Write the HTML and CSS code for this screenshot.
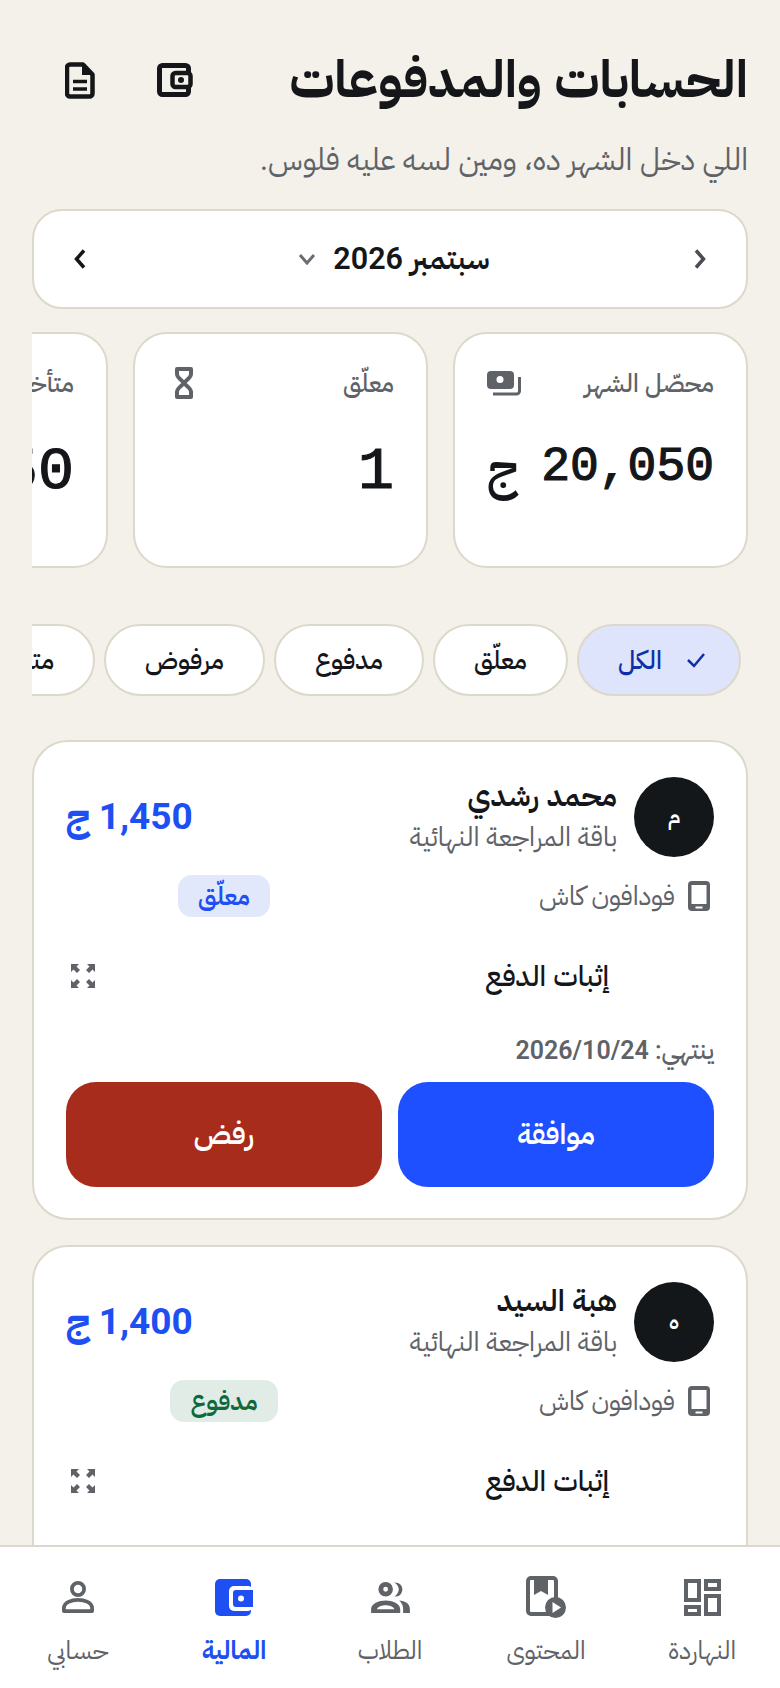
FILE: index.html
```html
<!DOCTYPE html>
<html lang="ar" dir="rtl">
<head>
  <meta charset="UTF-8" />
  <title>الحسابات والمدفوعات</title>
  <link rel="stylesheet" href="styles.css">
</head>
<body>
  <div class="app">
    <main class="content">
      <header class="top">
        <h1>الحسابات والمدفوعات</h1>
        <div class="top-actions">
          <svg class="ic-wallet" viewBox="0 0 36 34"><rect x="2.500" y="2.500" width="29" height="29" rx="3" fill="none" stroke="currentColor" stroke-width="5"/><rect x="15.500" y="10" width="18" height="14" rx="3" fill="#f4f1ea" stroke="currentColor" stroke-width="4.500"/><circle cx="24" cy="17" r="3" fill="currentColor"/></svg>
          <svg class="ic-doc" viewBox="0 0 30 37"><path d="M5 2.500h13l9.500 10v19a3 3 0 0 1-3 3H5a3 3 0 0 1-3-3v-26a3 3 0 0 1 3-3z" fill="none" stroke="currentColor" stroke-width="4.500" stroke-linejoin="round"/><path d="M17 2v11h10z" fill="currentColor"/><path d="M8 19.500h14M8 27h14" stroke="currentColor" stroke-width="3.500"/></svg>
        </div>
      </header>
      <p class="subtitle">اللي دخل الشهر ده، ومين لسه عليه فلوس.</p>

      <section class="month-bar">
        <svg class="ic-chev muted" viewBox="0 0 14 22"><path d="M3 2.500l7.500 8.500L3 19.500" fill="none" stroke="currentColor" stroke-width="3.500"/></svg>
        <div class="month-label"><span>سبتمبر 2026</span>
          <svg class="ic-down" viewBox="0 0 18 12"><path d="M2 2l7 8 7-8" fill="none" stroke="currentColor" stroke-width="3"/></svg>
        </div>
        <svg class="ic-chev" viewBox="0 0 14 22"><path d="M11 2.500L3.500 11l7.500 8.500" fill="none" stroke="currentColor" stroke-width="3.500"/></svg>
      </section>

      <section class="stats">
        <div class="stat">
          <div class="stat-head"><span>محصّل الشهر</span>
            <svg class="ic-money" viewBox="0 0 34 25"><rect x="0" y="0" width="27" height="18" rx="4" fill="currentColor"/><circle cx="13" cy="8.500" r="3.500" fill="#fff"/><path d="M32.500 6v14a3 3 0 0 1-3 3H6" fill="none" stroke="currentColor" stroke-width="3"/></svg>
          </div>
          <div class="stat-value"><span class="mono" dir="ltr">20,050</span> <span class="cur">ج</span></div>
        </div>
        <div class="stat">
          <div class="stat-head"><span>معلّق</span>
            <svg class="ic-hour" viewBox="-7 0 34 32"><path d="M3 2h14v5c0 4-5 6-7 9 2 3 7 5 7 9v5H3v-5c0-4 5-6 7-9-2-3-7-5-7-9z" fill="none" stroke="currentColor" stroke-width="4" stroke-linejoin="round"/></svg>
          </div>
          <div class="stat-value big"><span class="mono">1</span></div>
        </div>
        <div class="stat">
          <div class="stat-head"><span>متأخر</span></div>
          <div class="stat-value big"><span class="mono" dir="ltr">3,150</span></div>
        </div>
      </section>

      <nav class="chips">
        <span class="chip on"><svg class="ic-check" viewBox="0 0 20 16"><path d="M2 8l6 6L18 2" fill="none" stroke="currentColor" stroke-width="2.500"/></svg>الكل</span>
        <span class="chip">معلّق</span>
        <span class="chip">مدفوع</span>
        <span class="chip">مرفوض</span>
        <span class="chip">متأخر</span>
      </nav>

      <article class="pay-card">
        <div class="pay-top">
          <div class="avatar">م</div>
          <div class="who"><div class="name">محمد رشدي</div><div class="plan">باقة المراجعة النهائية</div></div>
          <div class="amount"><span dir="ltr">1,450</span> ج</div>
        </div>
        <div class="pay-mid">
          <div class="method"><svg class="ic-phone" viewBox="0 0 22 30"><rect x="0" y="0" width="22" height="30" rx="4" fill="currentColor"/><rect x="3.500" y="4" width="15" height="19" fill="#fff"/><rect x="7.500" y="25.500" width="7" height="2" fill="#fff"/></svg>فودافون كاش</div>
          <div class="badge-cell"><span class="badge pending">معلّق</span></div>
        </div>
        <div class="proof"><span>إثبات الدفع</span>
          <svg class="ic-expand" viewBox="0 0 26 26"><path d="M1 1h8L6.500 3.500 10 7 7 10 3.500 6.500 1 9zM25 1v8l-2.500-2.500L19 10l-3-3 3.500-3.500L17 1zM1 25v-8l2.500 2.500L7 16l3 3-3.500 3.500L9 25zM25 25h-8l2.500-2.500L16 19l3-3 3.500 3.500L25 17z" fill="currentColor"/></svg>
        </div>
        <div class="expiry">ينتهي: <span class="num">2026/10/24</span></div>
        <div class="actions">
          <button class="btn approve">موافقة</button>
          <button class="btn reject">رفض</button>
        </div>
      </article>

      <article class="pay-card tail">
        <div class="pay-top">
          <div class="avatar">ه</div>
          <div class="who"><div class="name">هبة السيد</div><div class="plan">باقة المراجعة النهائية</div></div>
          <div class="amount"><span dir="ltr">1,400</span> ج</div>
        </div>
        <div class="pay-mid">
          <div class="method"><svg class="ic-phone" viewBox="0 0 22 30"><rect x="0" y="0" width="22" height="30" rx="4" fill="currentColor"/><rect x="3.500" y="4" width="15" height="19" fill="#fff"/><rect x="7.500" y="25.500" width="7" height="2" fill="#fff"/></svg>فودافون كاش</div>
          <div class="badge-cell"><span class="badge paid">مدفوع</span></div>
        </div>
        <div class="proof"><span>إثبات الدفع</span>
          <svg class="ic-expand" viewBox="0 0 26 26"><path d="M1 1h8L6.500 3.500 10 7 7 10 3.500 6.500 1 9zM25 1v8l-2.500-2.500L19 10l-3-3 3.500-3.500L17 1zM1 25v-8l2.500 2.500L7 16l3 3-3.500 3.500L9 25zM25 25h-8l2.500-2.500L16 19l3-3 3.500 3.500L25 17z" fill="currentColor"/></svg>
        </div>
      </article>
    </main>

    <footer class="tabs">
      <div class="tab"><span class="tab-ic"><svg width="37" height="37" viewBox="0 0 37 37"><path d="M2 2h13v19H2zM22 2h13v8H22zM22 17h13v18H22zM2 28h13v7H2z" fill="none" stroke="currentColor" stroke-width="4"/></svg></span>النهاردة</div>
      <div class="tab"><span class="tab-ic"><svg width="40" height="42" viewBox="0 0 40 42"><path d="M2 5a3 3 0 0 1 3-3h22a3 3 0 0 1 3 3v33H5a3 3 0 0 1-3-3z" fill="none" stroke="currentColor" stroke-width="4"/><path d="M8 1h14v18l-7-4-7 4z" fill="currentColor"/><circle cx="29.500" cy="31.500" r="10.500" fill="currentColor"/><path d="M26.500 26v11l8.500-5.500z" fill="#fff"/></svg></span>المحتوى</div>
      <div class="tab"><span class="tab-ic"><svg width="41" height="33" viewBox="0 1 42 34"><path d="M16 2a7.500 7.500 0 1 0 0 15 7.500 7.500 0 0 0 0-15zm0 5a2.500 2.500 0 1 1 0 5 2.500 2.500 0 0 1 0-5z" fill="currentColor" fill-rule="evenodd"/><path d="M1 34v-4c0-6 8-9 15-9s15 3 15 9v4zm6-4h18c-1-3-6-4-9-4s-8 1-9 4z" fill="currentColor" fill-rule="evenodd"/><path d="M25 2.500c7 0 9 5 8 9s-4 6-8 5.500c3-2 4.500-5 4.500-7.500S28 4.500 25 2.500zM30 21c6 .5 11 3 11 9v4h-7v-5c0-3-2-6-4-8z" fill="currentColor"/></svg></span>الطلاب</div>
      <div class="tab on"><span class="tab-ic"><svg width="38" height="37" viewBox="0 0 38 37"><rect x="0" y="0" width="36" height="37" rx="5" fill="currentColor"/><rect x="14" y="7" width="24" height="25" rx="5" fill="#fff"/><path d="M21 11h17v17H21a3 3 0 0 1-3-3V14a3 3 0 0 1 3-3z" fill="currentColor"/><circle cx="26" cy="19.500" r="3" fill="#fff"/></svg></span>المالية</div>
      <div class="tab"><span class="tab-ic"><svg width="32" height="32" viewBox="0 0 34 34"><circle cx="17" cy="8.500" r="6.500" fill="none" stroke="currentColor" stroke-width="4"/><path d="M2 32v-3c0-6 8-9 15-9s15 3 15 9v3z" fill="none" stroke="currentColor" stroke-width="4" stroke-linejoin="round"/></svg></span>حسابي</div>
    </footer>
  </div>
</body>
</html>
```

FILE: styles.css
```css
* {
  box-sizing: border-box;
}

html,
body {
  margin: 0;
  padding: 0;
}

body {
  font-family: 'Roboto', 'IBM Plex Sans Arabic', 'Noto Sans Arabic', 'Noto Sans', 'DejaVu Sans', sans-serif;
  color: #14161a;
  background: #f4f1ea;
}

.app {
  width: 780px;
  height: 1688px;
  display: flex;
  flex-direction: column;
  overflow: hidden;
}

.content {
  flex: 1;
  min-height: 0;
  overflow: hidden;
  padding: 50px 32px 0;
}

.top {
  display: flex;
  justify-content: space-between;
  align-items: center;
  height: 60px;
}

h1 {
  margin: 0;
  font-size: 51px;
  font-weight: 700;
  line-height: 60px;
}

.top-actions {
  display: flex;
  gap: 62px;
  align-items: center;
  padding-left: 33px;
}

.ic-wallet {
  width: 36px;
  height: 34px;
}

.ic-doc {
  width: 30px;
  height: 37px;
}

.subtitle {
  margin: 30px 0 0;
  font-size: 30.500px;
  line-height: 40px;
  color: #5f6368;
}

.month-bar {
  margin-top: 29px;
  height: 100px;
  display: flex;
  justify-content: space-between;
  align-items: center;
  padding: 0 39px;
  background: #fff;
  border: 2px solid #dcd8cb;
  border-radius: 30px;
}

.ic-chev {
  width: 14px;
  height: 22px;
}

.muted {
  color: #4a4e54;
}

.month-label {
  margin-left: 8px;
  display: flex;
  align-items: center;
  gap: 17px;
  font-size: 30.500px;
  font-weight: 600;
}

.ic-down {
  width: 18px;
  height: 12px;
  color: #6a6e73;
}

.stats {
  margin-top: 23px;
  display: flex;
  gap: 25px;
  overflow: hidden;
}

.stat {
  flex: 0 0 295px;
  height: 236px;
  padding: 32px 32px;
  background: #fff;
  border: 2px solid #dcd8cb;
  border-radius: 34px;
}

.stat-head {
  display: flex;
  justify-content: space-between;
  align-items: center;
  height: 34px;
  font-size: 25px;
  font-weight: 500;
  color: #5f6368;
}

.ic-money {
  width: 34px;
  height: 25px;
}

.ic-hour {
  width: 34px;
  height: 32px;
}

.stat-value {
  margin-top: 37px;
  display: flex;
  align-items: center;
  justify-content: space-between;
  height: 70px;
}

.mono {
  margin-bottom: 10px;
  font-family: 'Liberation Mono', monospace;
  font-size: 48px;
  font-weight: 400;
  -webkit-text-stroke: 1.200px #14161a;
}

.big .mono {
  margin-bottom: 0;
  font-size: 60px;
}

.cur {
  margin-bottom: 5px;
  font-size: 50px;
  font-weight: 500;
}

.chips {
  margin-top: 56px;
  padding-right: 7px;
  display: flex;
  gap: 9px;
  overflow: hidden;
}

.chip {
  flex: none;
  height: 72px;
  padding: 0 39px;
  display: flex;
  align-items: center;
  gap: 24px;
  background: #fff;
  border: 2px solid #dcd8cb;
  border-radius: 36px;
  font-size: 26px;
  font-weight: 500;
}

.chip.on {
  padding: 0 33px 0 39px;
  background: #dee4fb;
  color: #0f2fa8;
}

.ic-check {
  width: 20px;
  height: 16px;
}

.pay-card {
  margin-top: 44px;
  padding: 34px 32px 31px;
  background: #fff;
  border: 2px solid #dcd8cb;
  border-radius: 36px;
}

.pay-card + .pay-card {
  margin-top: 25px;
}

.pay-card.tail {
  min-height: 480px;
}

.pay-top {
  display: flex;
  align-items: center;
  gap: 17px;
}

.avatar {
  flex: none;
  width: 80px;
  height: 80px;
  border-radius: 50%;
  background: #14171a;
  color: #fff;
  display: flex;
  align-items: center;
  justify-content: center;
  font-size: 21px;
  font-weight: 600;
}

.who {
  flex: 1;
}

.name {
  font-size: 30px;
  font-weight: 600;
  line-height: 39px;
}

.plan {
  margin-top: 3px;
  font-size: 27px;
  line-height: 39px;
  color: #5f6368;
}

.amount {
  font-size: 37px;
  font-weight: 700;
  color: #1d4ff2;
}

.pay-mid {
  margin-top: 18px;
  display: grid;
  grid-template-columns: 1fr 1fr;
  gap: 16px;
  align-items: center;
}

.method {
  display: flex;
  align-items: center;
  gap: 13px;
  padding-right: 4px;
  font-size: 26.500px;
  color: #5f6368;
}

.ic-phone {
  width: 22px;
  height: 30px;
}

.badge-cell {
  display: flex;
  justify-content: center;
}

.badge {
  height: 42px;
  padding: 0 20px;
  display: flex;
  align-items: center;
  border-radius: 14px;
  font-size: 25px;
  font-weight: 600;
}

.pending {
  background: #e2e8fb;
  color: #1d4ff2;
}

.paid {
  background: #e2ece6;
  color: #0e6a3e;
}

.proof {
  margin-top: 39px;
  display: flex;
  justify-content: space-between;
  align-items: center;
  padding: 0 105px 0 4px;
  height: 40px;
  font-size: 28.500px;
  font-weight: 500;
}

.ic-expand {
  width: 26px;
  height: 26px;
  color: #5f6368;
}

.expiry {
  margin-top: 36px;
  font-size: 25px;
  font-weight: 500;
  color: #5f6368;
}

.num {
  font-weight: 600;
  letter-spacing: 1px;
  unicode-bidi: isolate;
}

.actions {
  margin-top: 13px;
  display: grid;
  grid-template-columns: 1fr 1fr;
  gap: 16px;
}

.btn {
  height: 105px;
  border: none;
  border-radius: 30px;
  color: #fff;
  font-family: inherit;
  font-size: 29px;
  font-weight: 600;
}

.approve {
  background: #1e50ff;
}

.reject {
  background: #a82c1c;
}

.tabs {
  flex: none;
  height: 143px;
  display: grid;
  grid-template-columns: repeat(5, 1fr);
  background: #fff;
  border-top: 2px solid #dcd8cb;
}

.tab {
  display: flex;
  flex-direction: column;
  align-items: center;
  padding-top: 28px;
  gap: 13px;
  font-size: 25px;
  color: #5f6368;
}

.tab-ic {
  height: 44px;
  display: flex;
  align-items: center;
  justify-content: center;
}

.tab.on {
  color: #1d4ff2;
  font-weight: 700;
}
```
